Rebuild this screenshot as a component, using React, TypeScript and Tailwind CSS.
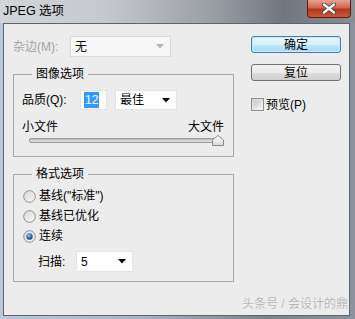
import React from 'react';

function Arrow({ color = '#000' }: { color?: string }) {
    return (
        <svg width="8" height="5" viewBox="0 0 8 5">
            <path d="M0 0 H8 L4 4.5 Z" fill={color} />
        </svg>
    );
}

function Radio({ checked }: { checked?: boolean }) {
    return (
        <svg width="13" height="13" viewBox="0 0 13 13">
            <defs>
                <linearGradient id="rb" x1="0" y1="0" x2="1" y2="1">
                    <stop offset="0" stopColor="#d8d8d8" />
                    <stop offset="1" stopColor="#f8f8f8" />
                </linearGradient>
                <radialGradient id="rd" cx="0.4" cy="0.35" r="0.7">
                    <stop offset="0" stopColor="#8fd3f5" />
                    <stop offset="0.5" stopColor="#2a80c0" />
                    <stop offset="1" stopColor="#103c68" />
                </radialGradient>
            </defs>
            <circle cx="6.5" cy="6.5" r="5.8" fill="url(#rb)" stroke="#8d8f92" strokeWidth="1" />
            {checked && <circle cx="6.5" cy="6.5" r="3.2" fill="url(#rd)" />}
        </svg>
    );
}

function Combo({ text, disabled }: { text: string; disabled?: boolean }) {
    return (
        <div
            className={
                disabled
                    ? 'flex h-full w-full items-center justify-between border border-[#d9d9d9] bg-[#f7f7f7] pl-[4px] pr-[6px] text-[#111]'
                    : 'flex h-full w-full items-center justify-between border border-[#e0e3e8] bg-white pl-[4px] pr-[6px]'
            }
        >
            <span>{text}</span>
            <Arrow color={disabled ? '#b8b8b8' : '#000'} />
        </div>
    );
}

export default function App() {
    return (
        <div className="relative h-[319px] w-[355px] overflow-hidden bg-[linear-gradient(90deg,#b9c9da_0%,#a9b3bf_40%,#7d838d_75%,#8c939c_100%)] text-[12px] leading-[16px] text-black font-['Liberation_Sans','Noto_Sans_CJK_SC',sans-serif]">
            {/* title bar */}
            <div className="flex h-[23px] items-start justify-between bg-[linear-gradient(90deg,#d3d6d9_0%,#c5c8cc_30%,#9a9ea5_60%,#72767e_80%,#8a8e95_100%)]">
                <div className="pl-[3px] pt-[3px] text-[12.5px] leading-[16px] text-black">JPEG 选项</div>
                <div className="mr-[4px] flex h-[18px] w-[44px] items-center justify-center rounded-b-[4px] border border-t-0 border-[#5e1a12] bg-[linear-gradient(180deg,#e8a493_0%,#d0644b_45%,#b8361d_55%,#c75a3a_100%)]">
                    <svg width="14" height="11" viewBox="0 0 14 11">
                        <path d="M2 1.5 L12 9.5 M12 1.5 L2 9.5" stroke="#3a3a3a" strokeWidth="4" strokeLinecap="round" />
                        <path d="M2 1.5 L12 9.5 M12 1.5 L2 9.5" stroke="#fff" strokeWidth="2.4" strokeLinecap="round" />
                    </svg>
                </div>
            </div>

            {/* client area */}
            <div className="ml-[3px] h-[293px] w-[347px] border border-[#5b6571] bg-[#ececec]">
                <div className="flex">
                    {/* left column */}
                    <div className="ml-[9px] w-[221px]">
                        <div className="mt-[12px] flex h-[21px] items-center">
                            <span className="w-[57px] text-[#a3a3a3]">杂边(M):</span>
                            <div className="h-full w-[101px]">
                                <Combo text="无" disabled />
                            </div>
                        </div>

                        {/* group 1 */}
                        <div className="relative mt-[17px] h-[83px] border border-[#a5a5a5]">
                            <span className="absolute left-[18px] top-[-9px] bg-[#ececec] px-[4px]">图像选项</span>
                            <div className="flex h-[20px] items-center pl-[8px] mt-[15px]">
                                <span className="w-[58px]">品质(Q):</span>
                                <div className="flex h-full w-[27px] items-center border border-[#e0e3e8] bg-white pl-[3px]">
                                    <span className="bg-[#3399ff] px-[1px] text-white">12</span>
                                </div>
                                <div className="ml-[8px] h-full w-[62px]">
                                    <Combo text="最佳" />
                                </div>
                            </div>
                            <div className="mt-[9px] flex h-[16px] items-center justify-between pl-[8px] pr-[9px]">
                                <span>小文件</span>
                                <span>大文件</span>
                            </div>
                            <div className="ml-[15px] flex h-[11px] w-[195px] items-center">
                                <div className="h-[5px] flex-1 rounded-[2px] border border-[#9a9a9a] bg-[linear-gradient(180deg,#bdbdbd,#e4e4e4)]" />
                                <svg width="12" height="11" viewBox="0 0 12 11" className="ml-[-10px]">
                                    <defs>
                                        <linearGradient id="th" x1="0" y1="0" x2="0" y2="1">
                                            <stop offset="0" stopColor="#ffffff" />
                                            <stop offset="1" stopColor="#dadada" />
                                        </linearGradient>
                                    </defs>
                                    <path d="M0.5 5 L6 0.5 L11.5 5 L11.5 10.5 L0.5 10.5 Z" fill="url(#th)" stroke="#8a8a8a" />
                                </svg>
                            </div>
                        </div>

                        {/* group 2 */}
                        <div className="relative mt-[17px] h-[108px] border border-[#a5a5a5]">
                            <span className="absolute left-[18px] top-[-9px] bg-[#ececec] px-[4px]">格式选项</span>
                            <div className="pl-[9px] pt-[11px]">
                                <div className="flex h-[20px] items-center gap-[3px]">
                                    <Radio />
                                    <span>基线("标准")</span>
                                </div>
                                <div className="flex h-[20px] items-center gap-[3px]">
                                    <Radio />
                                    <span>基线已优化</span>
                                </div>
                                <div className="flex h-[20px] items-center gap-[3px]">
                                    <Radio checked />
                                    <span>连续</span>
                                </div>
                                <div className="mt-[5px] flex h-[21px] items-center pl-[15px]">
                                    <span className="w-[38px]">扫描:</span>
                                    <div className="h-full w-[57px]">
                                        <Combo text="5" />
                                    </div>
                                </div>
                            </div>
                        </div>
                    </div>

                    {/* right column */}
                    <div className="ml-[17px] w-[90px]">
                        <div className="mt-[12px] flex h-[17px] items-center justify-center rounded-[3px] border border-[#3c7fb1] bg-[linear-gradient(180deg,#eaf6fd_0%,#d9f0fc_50%,#bee6fd_51%,#a7d9f5_100%)] shadow-[inset_0_0_0_1px_#c8ecfc]">
                            确定
                        </div>
                        <div className="mt-[11px] flex h-[17px] items-center justify-center rounded-[3px] border border-[#707070] bg-[linear-gradient(180deg,#f2f2f2_0%,#ebebeb_50%,#dddddd_51%,#cfcfcf_100%)]">
                            复位
                        </div>
                        <div className="mt-[17px] flex h-[13px] items-center gap-[2px]">
                            <div className="h-[13px] w-[13px] border border-[#8f8f8f] bg-[linear-gradient(135deg,#d0d0d0,#f6f6f6)] p-[2px]">
                                <div className="h-full w-full bg-[linear-gradient(135deg,#cbcbcb,#efefef)]" />
                            </div>
                            <span>预览(P)</span>
                        </div>
                    </div>
                </div>
            </div>

            <div className="absolute bottom-[8px] right-[7px] text-[12px] leading-[14px] text-[#b5b5b5] [text-shadow:0_0_1px_#fff]">
                头条号 / 会设计的鼎
            </div>
        </div>
    );
}
